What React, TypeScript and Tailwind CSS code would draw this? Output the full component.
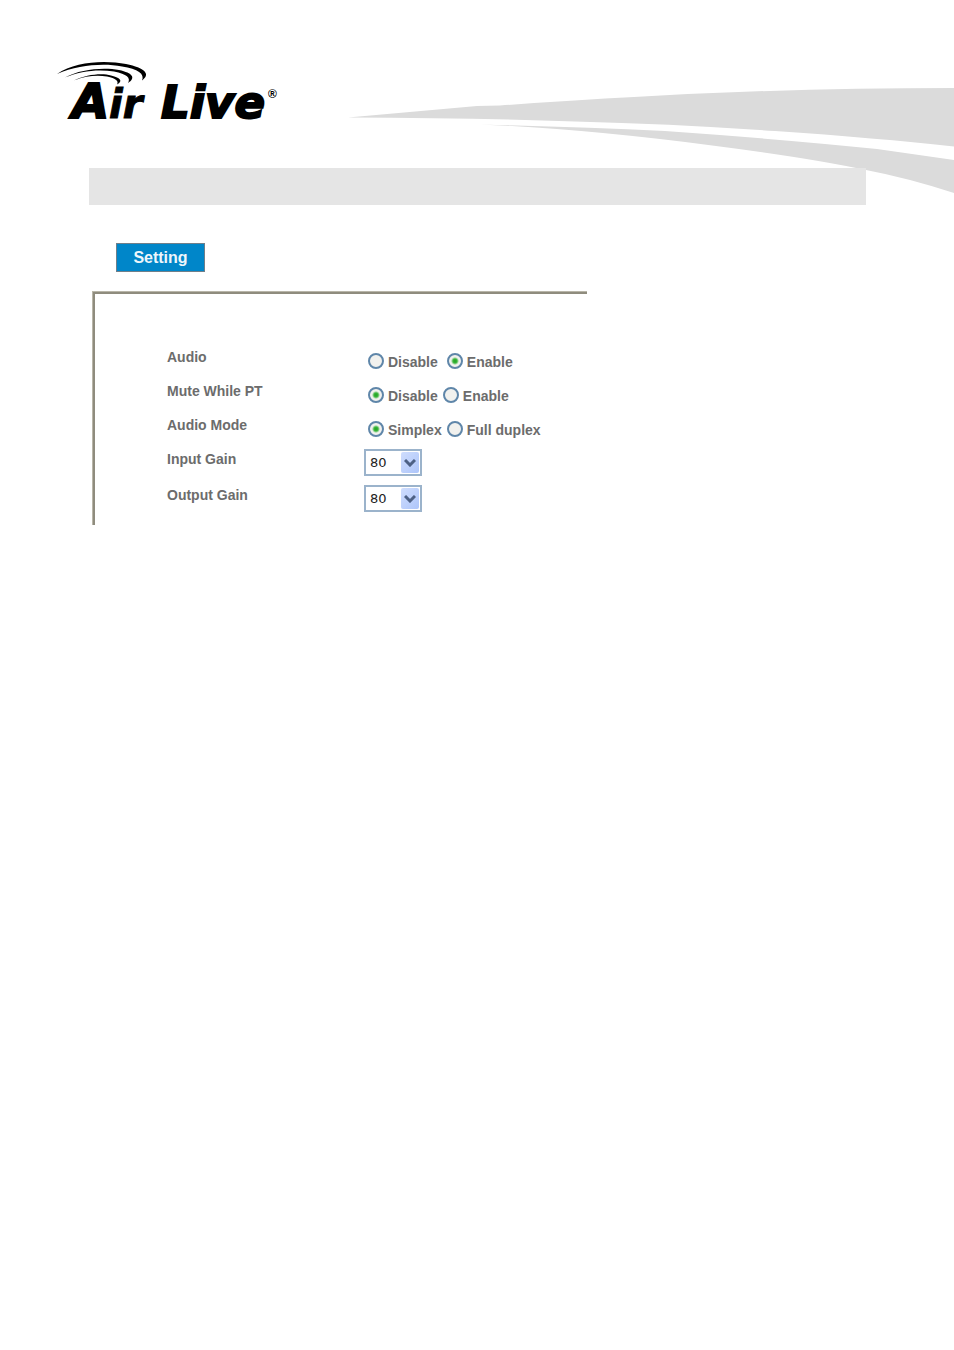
import React, { useState } from 'react';

interface RadioRowProps {
  name: string;
  label: string;
  options: string[];
  initial: string;
  wide?: boolean;
}

interface GainRowProps {
  id: string;
  label: string;
}

const gainLevels = [0, 10, 20, 30, 40, 50, 60, 70, 80, 90, 100];

const Logo: React.FC = () => (
  <svg
    role="img"
    aria-label="Air Live"
    viewBox="50 55 240 75"
    className="mt-[55px] ml-[50px] h-[75px] w-[240px] shrink-0"
  >
    {/* radio waves */}
    <path d="M57 74 C75 61 106 60 126 64 C145 68 151 74 142 80.500 C145 74 138 69 122 66.500 C103 63 78 65 57 74 Z" />
    <path d="M65 77.500 C80 69 104 67 119 70 C133 73 136 78 128 83 C131 78 127 74 114 71.500 C98 69 80 71 65 77.500 Z" />
    <path d="M74 80.500 C86 74.500 102 73 111 75.500 C121 78 123 81 117 84.500 C119 81 116 78.500 107 76.500 C96 75 86 76 74 80.500 Z" />
    <g className="font-['DejaVu_Sans'] font-bold italic" stroke="#000" strokeWidth="2">
      <text x="72" y="118" fontSize="48">A</text>
      <text x="109" y="118" fontSize="40" strokeWidth="1">ir</text>
      <text x="161" y="118" fontSize="45">Live</text>
    </g>
    <text x="268" y="98" fontSize="12" className="font-['Liberation_Sans'] font-bold">®</text>
  </svg>
);

const Swoosh: React.FC = () => (
  <svg
    aria-hidden="true"
    viewBox="348 88 606 106"
    preserveAspectRatio="none"
    className="mt-[88px] ml-[58px] h-[106px] min-w-0 flex-1"
    fill="#dbdbdb"
  >
    <path d="M348 117.500 L477 106 L500 105.500 Q575 100 634 97 Q790 88 954 88 V146.500 Q877 138 775 131 Q673 124 575 121.500 Q477 118 348 117.500 Z" />
    <path d="M481 124.500 Q579 127 665 131 Q779 139 877 149 L954 160 V193 Q908 178 866 170 Q810 158 716 146 Q587 129 481 124.500 Z" />
  </svg>
);

const RadioRow: React.FC<RadioRowProps> = ({ name, label, options, initial, wide }) => {
  const [value, setValue] = useState(initial);

  return (
    <div role="radiogroup" aria-labelledby={`${name}-label`} className="flex h-[34px] items-start">
      <span id={`${name}-label`} className="w-[201px] shrink-0 leading-5">{label}</span>
      <div className={`flex h-7 items-center ${wide ? 'gap-[9px]' : 'gap-[5px]'}`}>
        {options.map((option) => (
          <label key={option} className="flex items-center gap-1 whitespace-nowrap">
            <input
              type="radio"
              name={name}
              value={option}
              checked={value === option}
              onChange={() => setValue(option)}
              className="size-4 shrink-0 appearance-none rounded-full border-2 border-[#5f86a9] bg-[#f1f1ee] checked:bg-[radial-gradient(circle,#21a121_0,#39b539_2px,#f1f1ee_4px)]"
            />
            <span className="pt-[2px] leading-5">{option}</span>
          </label>
        ))}
      </div>
    </div>
  );
};

const GainRow: React.FC<GainRowProps> = ({ id, label }) => (
  <div className="flex h-9 items-start">
    <label htmlFor={id} className="w-[197px] shrink-0 leading-5">{label}</label>
    <div className="grid h-[27px] w-[58px]">
      <select
        id={id}
        defaultValue={80}
        className="col-start-1 row-start-1 appearance-none rounded-none border-2 border-[#9bb3cb] bg-white pt-px pl-1 font-['DejaVu_Sans'] text-[13px] font-normal text-[#222]"
      >
        {gainLevels.map((level) => (
          <option key={level} value={level}>{level}</option>
        ))}
      </select>
      <span className="pointer-events-none z-10 col-start-1 row-start-1 m-[3px] flex w-[18px] items-center justify-center justify-self-end rounded-xs bg-linear-to-br from-[#cfddfd] to-[#adc5fa]">
        <svg aria-hidden="true" viewBox="0 0 12 8" className="h-2 w-3" fill="none" stroke="#4d6185" strokeWidth="3">
          <path d="M1 1 L6 6 L11 1" />
        </svg>
      </span>
    </div>
  </div>
);

export default function App() {
  return (
    <div className="min-h-screen bg-white font-['Liberation_Sans',sans-serif]">
      <header className="flex items-start">
        <Logo />
        <Swoosh />
      </header>
      <div className="relative -mt-[26px] mr-[88px] ml-[89px] h-[37px] bg-[#e5e5e5]" />

      <main className="pl-[92px]">
        <button
          type="button"
          className="mt-[38px] ml-6 block h-[29px] w-[89px] border border-[#6f7f8a] bg-[#0086c9] text-base font-bold text-[#eef6fb]"
        >
          Setting
        </button>

        <div className="mt-[19px] max-w-[495px] border-t border-l border-[#b9b6a9]">
          <form className="border-t-2 border-l-2 border-[#8f8c7e] pt-[53px] pb-1 pl-[72px] text-sm font-bold text-[#6c6c6c]">
            <RadioRow name="audio" label="Audio" options={['Disable', 'Enable']} initial="Enable" wide />
            <RadioRow name="mute" label="Mute While PT" options={['Disable', 'Enable']} initial="Disable" />
            <RadioRow name="mode" label="Audio Mode" options={['Simplex', 'Full duplex']} initial="Simplex" />
            <GainRow id="input-gain" label="Input Gain" />
            <GainRow id="output-gain" label="Output Gain" />
          </form>
        </div>
      </main>
    </div>
  );
}
